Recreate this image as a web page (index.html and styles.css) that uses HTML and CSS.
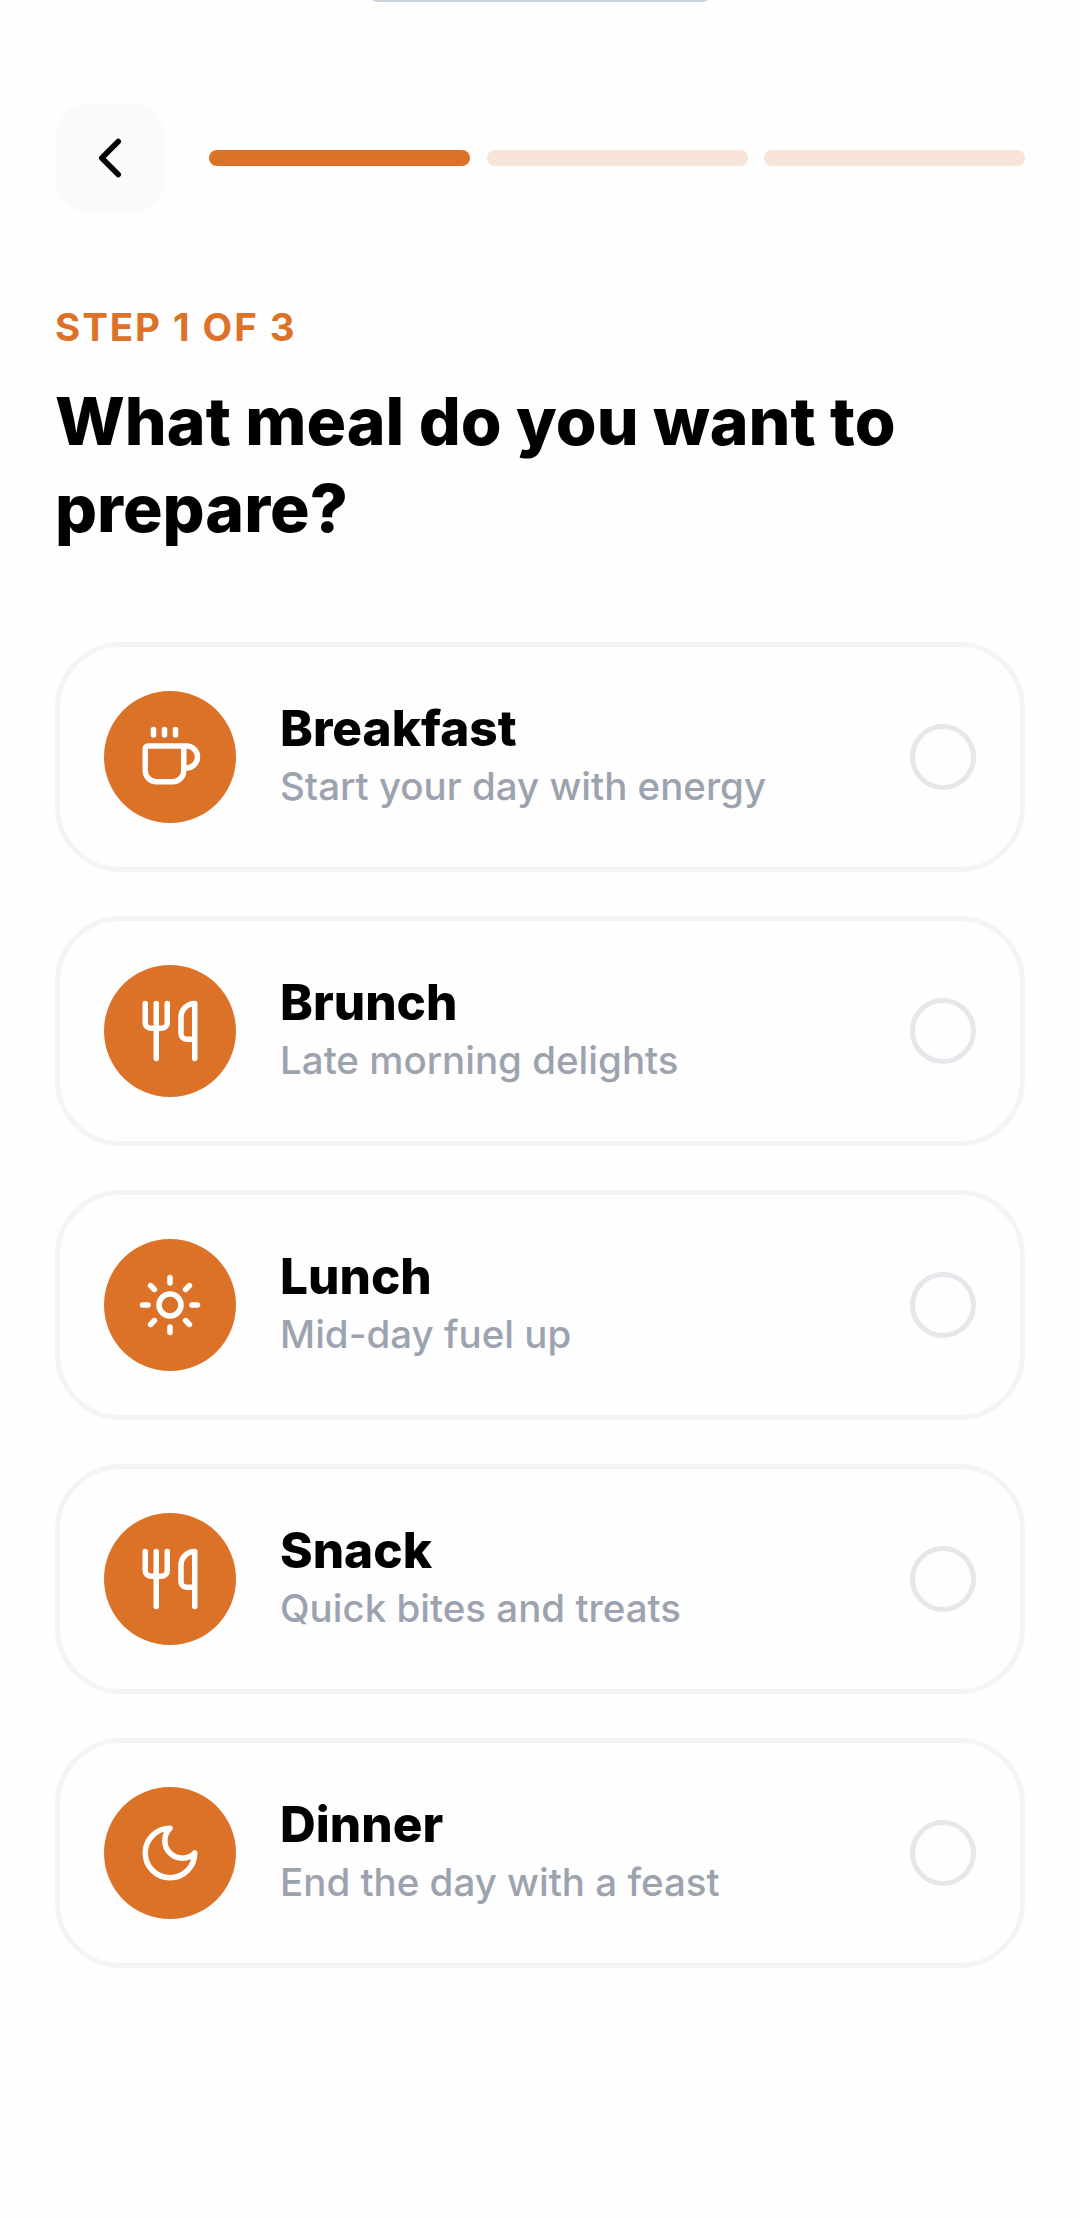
FILE: index.html
```html
<!DOCTYPE html>
<html lang="en">
<head>
  <meta charset="UTF-8" />
  <meta name="viewport" content="width=device-width, initial-scale=1.0" />
  <title>Choose a meal</title>
  <link rel="stylesheet" href="styles.css">
</head>
<body>
  <div class="camera-pill"></div>

  <div class="page">
    <div class="top-bar">
      <button class="back-btn" aria-label="Back">
        <svg class="icon" viewBox="0 0 24 24"><path d="m15 18-6-6 6-6"/></svg>
      </button>
      <div class="progress">
        <span class="progress-step active"></span>
        <span class="progress-step"></span>
        <span class="progress-step"></span>
      </div>
    </div>

    <p class="step-label">STEP 1 OF 3</p>
    <h1 class="page-title">What meal do you want to prepare?</h1>

    <div class="meal-list">
      <div class="meal-card">
        <div class="meal-icon">
          <svg class="icon" viewBox="0 0 24 24"><path d="M10 2v2"/><path d="M14 2v2"/><path d="M16 8a1 1 0 0 1 1 1v8a4 4 0 0 1-4 4H7a4 4 0 0 1-4-4V9a1 1 0 0 1 1-1h14a4 4 0 1 1 0 8h-1"/><path d="M6 2v2"/></svg>
        </div>
        <div class="meal-text">
          <div class="meal-name">Breakfast</div>
          <div class="meal-desc">Start your day with energy</div>
        </div>
        <span class="radio"></span>
      </div>

      <div class="meal-card">
        <div class="meal-icon">
          <svg class="icon" viewBox="0 0 24 24"><path d="M3 2v7c0 1.1.9 2 2 2h4a2 2 0 0 0 2-2V2"/><path d="M7 2v20"/><path d="M21 15V2a5 5 0 0 0-5 5v6c0 1.1.9 2 2 2h3Zm0 0v7"/></svg>
        </div>
        <div class="meal-text">
          <div class="meal-name">Brunch</div>
          <div class="meal-desc">Late morning delights</div>
        </div>
        <span class="radio"></span>
      </div>

      <div class="meal-card">
        <div class="meal-icon">
          <svg class="icon" viewBox="0 0 24 24"><circle cx="12" cy="12" r="4"/><path d="M12 2v2"/><path d="M12 20v2"/><path d="m4.93 4.93 1.41 1.41"/><path d="m17.66 17.66 1.41 1.41"/><path d="M2 12h2"/><path d="M20 12h2"/><path d="m6.34 17.66-1.41 1.41"/><path d="m19.07 4.93-1.41 1.41"/></svg>
        </div>
        <div class="meal-text">
          <div class="meal-name">Lunch</div>
          <div class="meal-desc">Mid-day fuel up</div>
        </div>
        <span class="radio"></span>
      </div>

      <div class="meal-card">
        <div class="meal-icon">
          <svg class="icon" viewBox="0 0 24 24"><path d="M3 2v7c0 1.1.9 2 2 2h4a2 2 0 0 0 2-2V2"/><path d="M7 2v20"/><path d="M21 15V2a5 5 0 0 0-5 5v6c0 1.1.9 2 2 2h3Zm0 0v7"/></svg>
        </div>
        <div class="meal-text">
          <div class="meal-name">Snack</div>
          <div class="meal-desc">Quick bites and treats</div>
        </div>
        <span class="radio"></span>
      </div>

      <div class="meal-card">
        <div class="meal-icon">
          <svg class="icon" viewBox="0 0 24 24"><path d="M12 3a6 6 0 0 0 9 9 9 9 0 1 1-9-9Z"/></svg>
        </div>
        <div class="meal-text">
          <div class="meal-name">Dinner</div>
          <div class="meal-desc">End the day with a feast</div>
        </div>
        <span class="radio"></span>
      </div>
    </div>
  </div>
</body>
</html>
```

FILE: styles.css
```css
html, body {
  margin: 0;
  padding: 0;
  background: #fefefe;
  font-family: 'Inter', sans-serif;
  color: #000;
}

body {
  position: relative;
  height: 2218px;
  overflow: hidden;
}

.camera-pill {
  position: absolute;
  top: -38px;
  left: 360px;
  width: 360px;
  height: 39.5px;
  border-radius: 0 0 20px 20px;
  background: #c9d1dc;
}

.page {
  box-sizing: border-box;
  padding: 103px 55px 0;
}

.top-bar {
  display: flex;
  align-items: center;
  gap: 44px;
}

.back-btn {
  flex-shrink: 0;
  width: 110px;
  height: 110px;
  padding: 0;
  border: none;
  border-radius: 33px;
  background: #f9fafb;
  color: #000;
  display: flex;
  justify-content: center;
  align-items: center;
}

.icon {
  width: 66px;
  height: 66px;
  fill: none;
  stroke: currentColor;
  stroke-width: 2;
  stroke-linecap: round;
  stroke-linejoin: round;
}

.progress {
  flex: 1;
  display: flex;
  gap: 16.5px;
}

.progress-step {
  flex: 1;
  height: 16.5px;
  border-radius: 8px;
  background: #f8e3d7;
}

.progress-step.active {
  background: #dc7128;
}

.step-label {
  margin: 92px 0 0;
  font-size: 38.5px;
  line-height: 44px;
  font-weight: 700;
  letter-spacing: 1.925px;
  color: #dc7128;
}

.page-title {
  margin: 29px 0 0;
  font-size: 66px;
  line-height: 87px;
  font-weight: 800;
}

.meal-list {
  margin-top: 90px;
  display: flex;
  flex-direction: column;
  gap: 44px;
}

.meal-card {
  box-sizing: border-box;
  height: 230px;
  padding: 0 44px;
  border: 5.5px solid #f3f4f6;
  border-radius: 66px;
  display: flex;
  align-items: center;
  gap: 44px;
}

.meal-icon {
  flex-shrink: 0;
  width: 132px;
  height: 132px;
  border-radius: 50%;
  background: #dc7128;
  color: #fff;
  display: flex;
  justify-content: center;
  align-items: center;
}

.meal-text {
  flex: 1;
  padding-bottom: 2px;
}

.meal-name {
  font-size: 49.5px;
  line-height: 60px;
  font-weight: 800;
}

.meal-desc {
  font-size: 38.5px;
  line-height: 56px;
  font-weight: 500;
  color: #9ca3af;
}

.radio {
  flex-shrink: 0;
  box-sizing: border-box;
  width: 66px;
  height: 66px;
  border: 5.5px solid #e5e7eb;
  border-radius: 50%;
}
```
